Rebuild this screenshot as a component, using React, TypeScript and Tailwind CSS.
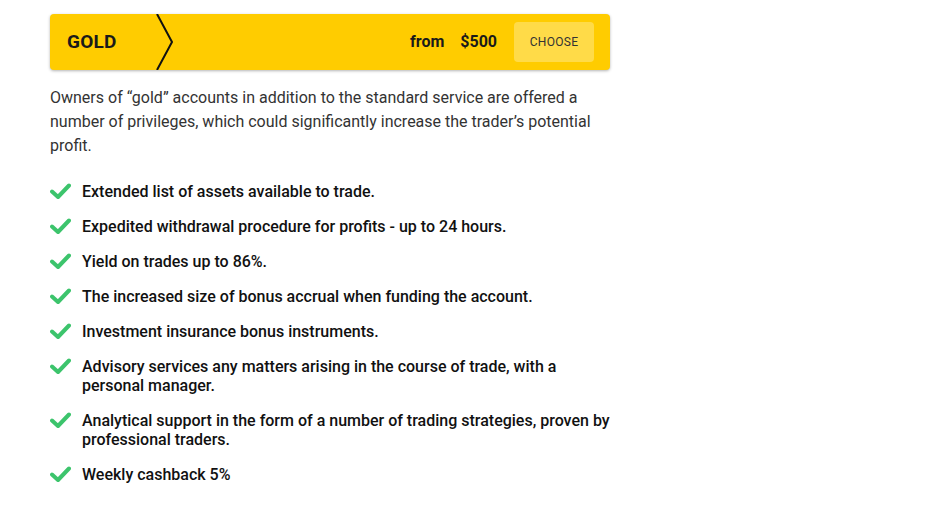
import React from "react";

const items: string[] = [
  "Extended list of assets available to trade.",
  "Expedited withdrawal procedure for profits - up to 24 hours.",
  "Yield on trades up to 86%.",
  "The increased size of bonus accrual when funding the account.",
  "Investment insurance bonus instruments.",
  "Advisory services any matters arising in the course of trade, with a personal manager.",
  "Analytical support in the form of a number of trading strategies, proven by professional traders.",
  "Weekly cashback 5%",
];

function Check() {
  return (
    <svg width="21" height="16" viewBox="0 0 21 16" className="shrink-0 mt-[1px]">
      <path d="M2 8.5 L8 14 L19 2.5" fill="none" stroke="#3cc46c" strokeWidth="4" strokeLinecap="round" strokeLinejoin="round" />
    </svg>
  );
}

export default function App() {
  return (
    <div className="w-[927px] h-[526px] bg-white" style={{ fontFamily: "Roboto, 'Liberation Sans', sans-serif" }}>
      <div className="pt-[14px] pl-[50px] w-[610px]">
        <div className="relative flex items-center h-[56px] w-[560px] bg-[#ffcc00] rounded-[4px] shadow-[0_1px_3px_rgba(0,0,0,0.3)]">
          <div className="pl-[17px] text-[19px] font-bold text-[#1a1a1a] tracking-[0.2px]">GOLD</div>
          <svg className="absolute left-[105px] top-0" width="20" height="56" viewBox="0 0 20 56">
            <path d="M2 0 L17 28 L2 56" fill="none" stroke="#111" strokeWidth="2" />
          </svg>
          <div className="ml-auto flex items-center">
            <span className="text-[16px] font-bold text-[#1a1a1a]">from</span>
            <span className="ml-[16px] text-[16px] font-bold text-[#1a1a1a]">$500</span>
            <button className="ml-[17px] mr-[16px] w-[80px] h-[40px] rounded-[4px] bg-[#ffdb48] text-[12px] text-[#333] tracking-[0.3px]">CHOOSE</button>
          </div>
        </div>
        <p className="mt-[16px] text-[16px] leading-[24px] text-[#333]">
          Owners of “gold” accounts in addition to the standard service are offered a number of privileges, which could significantly increase the trader’s potential profit.
        </p>
        <ul className="mt-[24px] flex flex-col gap-[16px]">
          {items.map((t) => (
            <li key={t} className="flex items-start">
              <Check />
              <span className="ml-[11px] text-[16px] leading-[19px] font-medium text-[#111]">{t}</span>
            </li>
          ))}
        </ul>
      </div>
    </div>
  );
}
